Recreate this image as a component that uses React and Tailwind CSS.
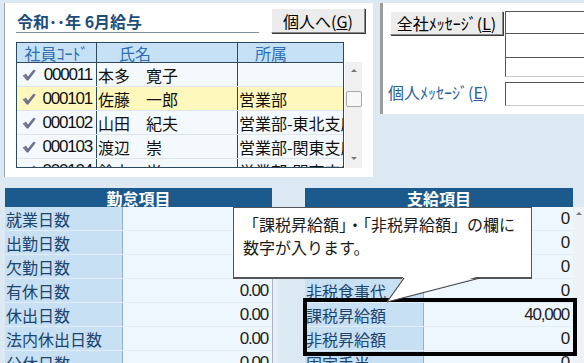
import React from "react";

const staff = [
  { code: "000011", name: "本多　寛子", dept: "" },
  { code: "000101", name: "佐藤　一郎", dept: "営業部", sel: true },
  { code: "000102", name: "山田　紀夫", dept: "営業部-東北支店" },
  { code: "000103", name: "渡辺　崇", dept: "営業部-関東支店" },
  { code: "000104", name: "鈴木　光", dept: "営業部-関東支店" },
];

const kintai = [
  { label: "就業日数", value: "0.00" },
  { label: "出勤日数", value: "0.00" },
  { label: "欠勤日数", value: "0.00" },
  { label: "有休日数", value: "0.00" },
  { label: "休出日数", value: "0.00" },
  { label: "法内休出日数", value: "0.00" },
  { label: "公休日数", value: "0.00" },
];

const shikyu = [
  { label: "基本給", value: "0" },
  { label: "役職手当", value: "0" },
  { label: "通勤手当", value: "0" },
  { label: "非税食事代", value: "0" },
  { label: "課税昇給額", value: "40,000" },
  { label: "非税昇給額", value: "0" },
  { label: "固定手当", value: "0" },
];

const Check = () => (
  <svg width="14" height="12" viewBox="0 0 14 12" className="shrink-0">
    <defs>
      <linearGradient id="chk" x1="0" y1="0" x2="1" y2="1">
        <stop offset="0" stopColor="#9a9ab4" />
        <stop offset="1" stopColor="#4f4f72" />
      </linearGradient>
    </defs>
    <path d="M0.5 6.5 L4 4.5 L6 7.5 L11.5 0.5 L13.8 1.8 L6.2 11.6 L4.8 11.6 Z" fill="url(#chk)" />
  </svg>
);

const Btn = ({ children, className }) => (
  <div
    className={`flex items-center justify-center bg-[#ececec] border border-t-white border-l-white border-r-[#8a8a8a] border-b-[#8a8a8a] shadow-[1px_1px_0_#3a3a3a] text-black ${className}`}
  >
    {children}
  </div>
);

const num = "font-['Liberation_Sans',sans-serif] text-[17px] tracking-[-1.2px]";

function Grid({ title, rows, labelW }) {
  return (
    <div>
      <div className="h-[19px] bg-[#1c5a8d] text-white font-bold flex items-center justify-center">
        {title}
      </div>
      {rows.map((r) => (
        <div key={r.label} className="flex h-[24px] border-b border-[#e3edf5]">
          <div
            className={`${labelW} bg-[#c7e0f4] border-r border-[#8fb0c8] flex items-center pl-[1px] text-[#1d4570] whitespace-nowrap overflow-hidden`}
          >
            {r.label}
          </div>
          <div className={`flex-1 bg-[#eef7fe] flex items-center justify-end pr-[4px] text-[#222] ${num}`}>
            {r.value}
          </div>
        </div>
      ))}
    </div>
  );
}

export default function App() {
  return (
    <div className="relative w-[584px] h-[363px] overflow-hidden bg-[#dce8f2] font-['Noto_Sans_CJK_JP',sans-serif] text-[16px] leading-none text-[#111]">
      {/* TOP */}
      <div className="flex h-[188px] pt-[3px] items-start">
        {/* staff panel */}
        <div className="ml-[4px] w-[369px] h-[174px] bg-white border-l border-[#9aa6b0]">
          <div className="flex mt-[5px]">
            <div className="ml-[11px] w-[243px] h-[25px] border-b border-[#7d8f9c] flex items-end pb-[3px] pl-[1px] font-bold text-[#1c4d78] whitespace-nowrap">
              令和･･年 6月給与
            </div>
            <Btn className="ml-[12px] w-[94px] h-[25px]">
              個人へ(<span className="underline">G</span>)
            </Btn>
          </div>

          <div className="flex mt-[9px] ml-[11px]">
            <div className="w-[328px] h-[126px] border border-[#2b4a60] overflow-hidden">
              <div className="flex h-[20px] border-b border-[#2b4a60] bg-[#c6e0f5] text-[#2f6eb5]">
                <div className="w-[80px] border-r border-[#2b4a60] flex items-center justify-center">社員ｺｰﾄﾞ</div>
                <div className="w-[141px] border-r border-[#2b4a60] flex items-center pl-[22px]">氏名</div>
                <div className="flex-1 flex items-center pl-[17px]">所属</div>
              </div>
              {staff.map((s) => (
                <div
                  key={s.code}
                  className={`flex h-[24px] border-b border-[#dde5ec] ${s.sel ? "bg-[#fff8bd]" : "bg-[#f4f9fd]"}`}
                >
                  <div className="w-[80px] border-r border-[#2b4a60] flex items-center pl-[5px]">
                    <Check />
                    <span className={`flex-1 text-right pr-[4px] ${num}`}>{s.code}</span>
                  </div>
                  <div className="w-[141px] border-r border-[#2b4a60] flex items-center pl-[1px] whitespace-nowrap">
                    {s.name}
                  </div>
                  <div className="flex-1 flex items-center pl-[1px] whitespace-nowrap overflow-hidden">
                    {s.dept}
                  </div>
                </div>
              ))}
            </div>
            <div className="mt-[20px] ml-[1px] w-[17px] h-[106px] bg-[#f0f0f0] flex flex-col items-center">
              <div className="mt-[7px] w-0 h-0 border-x-[3px] border-x-transparent border-b-[3px] border-b-[#777]" />
              <div className="mt-[19px] w-[16px] h-[16px] bg-[#f7f7f7] border border-[#a8a8a8] rounded-[2px]" />
              <div className="mt-auto mb-[8px] w-0 h-0 border-x-[3px] border-x-transparent border-t-[3px] border-t-[#777]" />
            </div>
          </div>
        </div>

        {/* message panel */}
        <div className="ml-[7px] flex-1 h-[111px] bg-white border-l-[3px] border-[#9c9c9c] flex">
          <div className="w-[122px] flex flex-col">
            <Btn className="mt-[8px] ml-[7px] w-[113px] h-[24px] whitespace-nowrap">
              全社ﾒｯｾｰｼﾞ(<span className="underline">L</span>)
            </Btn>
            <div className="mt-[49px] ml-[5px] text-[#2a5fa0] whitespace-nowrap">
              個人ﾒｯｾｰｼﾞ(<span className="underline">E</span>)
            </div>
          </div>
          <div className="flex-1 flex flex-col">
            <div className="mt-[8px] h-[22px] border-t border-l border-[#555] bg-white" />
            <div className="h-[24px] border-t border-l border-[#555] bg-white" />
            <div className="h-[20px] border-t border-l border-b border-[#555] border-b-[#c8c8c8] bg-white" />
            <div className="mt-[5px] h-[24px] border-t border-l border-b border-[#555] border-b-[#c8c8c8] bg-white" />
          </div>
        </div>
      </div>

      {/* BOTTOM */}
      <div className="flex items-start">
        <div className="ml-[5px] w-[267px]">
          <Grid title="勤怠項目" rows={kintai} labelW="w-[118px]" />
        </div>
        <div className="mt-[19px] w-[6px] h-[160px] bg-[#e8eef3] border-l border-[#a9b8c4]" />
        <div className="ml-[27px] w-[268px]">
          <Grid title="支給項目" rows={shikyu} labelW="w-[119px]" />
        </div>
        <div className="mt-[19px] w-[11px] h-[160px] bg-[#eef2f5] flex justify-center">
          <div className="mt-[5px] w-0 h-0 border-x-[3px] border-x-transparent border-b-[3px] border-b-[#777]" />
        </div>
      </div>

      {/* highlight frame */}
      <div className="absolute left-[303px] top-[298px] w-[274px] h-[58px] border-[4px] border-black" />

      {/* callout */}
      <div className="absolute left-[233px] top-[207px] w-[299px] h-[72px] bg-white border border-[#555] border-b-2 pl-[9px] pt-[5px] leading-[23px] text-[#1a1a1a]">
        <div>「課税昇給額」・「非税昇給額」の欄に</div>
        <div>数字が入ります。</div>
      </div>
      <svg className="absolute left-[380px] top-[276px]" width="110" height="30" viewBox="0 0 110 30">
        <polygon points="24,0 100,0 7,26" fill="#fff" />
        <line x1="24" y1="2" x2="7" y2="26" stroke="#444" strokeWidth="1.2" />
        <line x1="100" y1="2" x2="7" y2="26" stroke="#444" strokeWidth="1.2" />
      </svg>
    </div>
  );
}
